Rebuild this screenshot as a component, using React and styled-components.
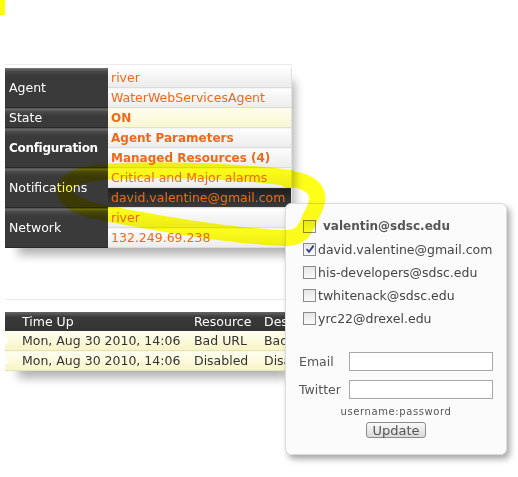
import React from 'react'
import styled, { createGlobalStyle } from 'styled-components'

const Global = createGlobalStyle`
  html, body { margin:0; padding:0; background:#fff; }
  body { font-family:"DejaVu Sans", Verdana, sans-serif; }
`

const agentRows = [
  { label: 'Agent', values: ['river', 'WaterWebServicesAgent'] },
  { label: 'State', values: ['ON'], tone: 'cream', bold: true },
  { label: 'Configuration', values: ['Agent Parameters', 'Managed Resources (4)'], bold: true, strong: true },
  { label: 'Notifications', values: ['Critical and Major alarms', 'david.valentine@gmail.com'], darkIndex: 1 },
  { label: 'Network', values: ['river', '132.249.69.238'] },
]

const alarms = [
  { time: 'Mon, Aug 30 2010, 14:06', resource: 'Bad URL', desc: 'Bad URL' },
  { time: 'Mon, Aug 30 2010, 14:06', resource: 'Disabled', desc: 'Disabled' },
]

const recipients = [
  { email: 'valentin@sdsc.edu', bold: true },
  { email: 'david.valentine@gmail.com', checked: true },
  { email: 'his-developers@sdsc.edu' },
  { email: 'twhitenack@sdsc.edu' },
  { email: 'yrc22@drexel.edu' },
]

function Box({ checked }) {
  return (
    <Check>
      {checked && (
        <svg width="10" height="10" viewBox="0 0 10 10">
          <path d="M1.5 5 L4 7.8 L8.6 1.6" fill="none" stroke="#2c3f8a" strokeWidth="1.8" />
        </svg>
      )}
    </Check>
  )
}

export default function App() {
  return (
    <Page>
      <Global />
      <Mark />
      <Stage>
        <Panel>
          <InfoTable>
            <tbody>
              {agentRows.map((row) =>
                row.values.map((v, i) => (
                  <tr key={row.label + i}>
                    {i === 0 && (
                      <Label rowSpan={row.values.length} $strong={row.strong}>{row.label}</Label>
                    )}
                    <Value $tone={row.darkIndex === i ? 'dark' : row.tone} $bold={row.bold}>{v}</Value>
                  </tr>
                ))
              )}
            </tbody>
          </InfoTable>
        </Panel>

        <Panel $gap>
          <AlarmTable>
            <colgroup>
              <col style={{ width: 189 }} />
              <col style={{ width: 70 }} />
              <col />
            </colgroup>
            <thead>
              <tr>
                <Head>Time Up</Head>
                <Head>Resource</Head>
                <Head>Description</Head>
              </tr>
            </thead>
            <tbody>
              {alarms.map((a, i) => (
                <tr key={i}>
                  <Cell>{a.time}</Cell>
                  <Cell>{a.resource}</Cell>
                  <Cell>{a.desc}</Cell>
                </tr>
              ))}
            </tbody>
          </AlarmTable>
        </Panel>

        <Popup>
          <List>
            {recipients.map((r) => (
              <Item key={r.email} $bold={r.bold}>
                <Box checked={r.checked} />
                <span>{r.email}</span>
              </Item>
            ))}
          </List>
          <Form>
            <Field>
              <FieldLabel>Email</FieldLabel>
              <Input />
            </Field>
            <Field>
              <FieldLabel>Twitter</FieldLabel>
              <Input />
            </Field>
            <Hint>username:password</Hint>
            <UpdateButton>Update</UpdateButton>
          </Form>
        </Popup>

        {/* marker scribble, page coords minus the 15px mark */}
        <Highlight width="518" height="477" viewBox="0 0 518 477">
          <path
            d="M290 163 C230 155, 140 153, 95 158 C55 163, 52 187, 100 197 C150 207, 230 221, 284 223 C302 224, 306 213, 310 203 C318 189, 322 177, 308 169 C300 165, 296 164, 288 165"
            fill="none"
            stroke="#ffff00"
            strokeWidth="16"
            strokeLinecap="round"
            strokeLinejoin="round"
          />
        </Highlight>
      </Stage>
    </Page>
  )
}

const Page = styled.div`
  width:518px;
  height:477px;
  overflow:hidden;
  position:relative;
`

const Mark = styled.div`
  width:5px;
  height:15px;
  background:#ffff00;
`

const Stage = styled.div`
  position:relative;
  padding:49px 0 0 5px;
`

const Panel = styled.div`
  width:${(p) => (p.$gap ? '280px' : '287px')};
  overflow:hidden;
  padding-top:${(p) => (p.$gap ? '12px' : '3px')};
  border-top:1px solid #ececec;
  margin-top:${(p) => (p.$gap ? '51px' : '0')};
  box-shadow:8px 12px 9px -5px rgba(0,0,0,0.3);
  background:#fff;
`

const InfoTable = styled.table`
  width:287px;
  border-collapse:collapse;
  font-size:12.5px;
`

const Label = styled.td`
  width:99px;
  padding:0 0 0 4px;
  color:#fff;
  font-weight:${(p) => (p.$strong ? 'bold' : 'normal')};
  font-size:${(p) => (p.$strong ? '12px' : '12.5px')};
  letter-spacing:${(p) => (p.$strong ? '-0.3px' : '0')};
  background:linear-gradient(#777 0, #4a4a4a 3px, #3a3a3a 8px, #3a3a3a 100%);
  border-bottom:1px solid #2a2a2a;
  vertical-align:middle;
`

const Value = styled.td`
  height:19px;
  padding:0 0 0 3px;
  white-space:nowrap;
  font-weight:${(p) => (p.$bold ? 'bold' : 'normal')};
  font-size:${(p) => (p.$bold ? '12px' : '12.5px')};
  color:#ec6a1c;
  border-bottom:1px solid #dcdcdc;
  border-right:1px solid #e2e2e2;
  background:${(p) =>
    p.$tone === 'cream'
      ? 'linear-gradient(#fffef0, #f8f5cf)'
      : p.$tone === 'dark'
      ? 'linear-gradient(#1e1e1e, #3c3c3c)'
      : 'linear-gradient(#fdfdfd, #ececec)'};
`

const AlarmTable = styled.table`
  width:320px;
  table-layout:fixed;
  border-collapse:collapse;
  font-size:12.5px;
  color:#333;
`

const Head = styled.th`
  height:19px;
  padding:0;
  text-align:left;
  font-weight:normal;
  color:#fff;
  white-space:nowrap;
  overflow:hidden;
  background:linear-gradient(#666 0, #3a3a3a 5px, #333 100%);
  &:first-child { padding-left:17px; }
`

const Cell = styled.td`
  height:19px;
  padding:0;
  white-space:nowrap;
  overflow:hidden;
  border-bottom:1px solid #e4e2b8;
  background:linear-gradient(#fffff0, #f7f4c6);
  position:relative;
  &:first-child { padding-left:17px; }
  &:first-child::before {
    content:'';
    position:absolute;
    left:-3px;
    top:7px;
    width:6px;
    height:6px;
    border-radius:50%;
    background:#fff;
  }
`

const Highlight = styled.svg`
  position:absolute;
  left:0;
  top:0;
  mix-blend-mode:multiply;
  opacity:0.9;
  pointer-events:none;
  z-index:3;
`

const Popup = styled.div`
  position:absolute;
  left:285px;
  top:188px;
  width:222px;
  height:252px;
  box-sizing:border-box;
  padding:14px 0 0 0;
  background:#fbfbfb;
  border:1px solid #dcdcdc;
  border-radius:6px;
  box-shadow:3px 4px 6px rgba(0,0,0,0.35);
  color:#444;
  font-size:12.5px;
  z-index:2;
`

const List = styled.div`
  display:flex;
  flex-direction:column;
  gap:7px;
  padding-left:17px;
`

const Item = styled.label`
  display:flex;
  align-items:center;
  gap:${(p) => (p.$bold ? '7px' : '2px')};
  height:16px;
  font-weight:${(p) => (p.$bold ? 'bold' : 'normal')};
  font-size:${(p) => (p.$bold ? '12px' : '12.5px')};
  color:${(p) => (p.$bold ? '#555' : '#444')};
`

const Check = styled.span`
  display:inline-flex;
  align-items:center;
  justify-content:center;
  width:11px;
  height:11px;
  border:1px solid #8a8a8a;
  background:linear-gradient(#e6e6e6, #fafafa);
  flex:none;
`

const Form = styled.div`
  display:flex;
  flex-direction:column;
  align-items:center;
  margin-top:26px;
`

const Field = styled.div`
  display:flex;
  align-items:center;
  width:194px;
  margin-bottom:9px;
`

const FieldLabel = styled.span`
  width:50px;
  color:#555;
`

const Input = styled.div`
  width:142px;
  height:17px;
  border:1px solid #a8a8a8;
  background:#fff;
`

const Hint = styled.div`
  font-size:10px;
  letter-spacing:0.6px;
  color:#555;
  margin-top:-2px;
`

const UpdateButton = styled.button`
  margin-top:5px;
  height:16px;
  width:60px;
  padding:0;
  font-family:"DejaVu Sans", Verdana, sans-serif;
  font-size:13px;
  line-height:13px;
  color:#555;
  border:1px solid #8c8c8c;
  border-radius:3px;
  background:linear-gradient(#fafafa, #d9d9d9);
`
